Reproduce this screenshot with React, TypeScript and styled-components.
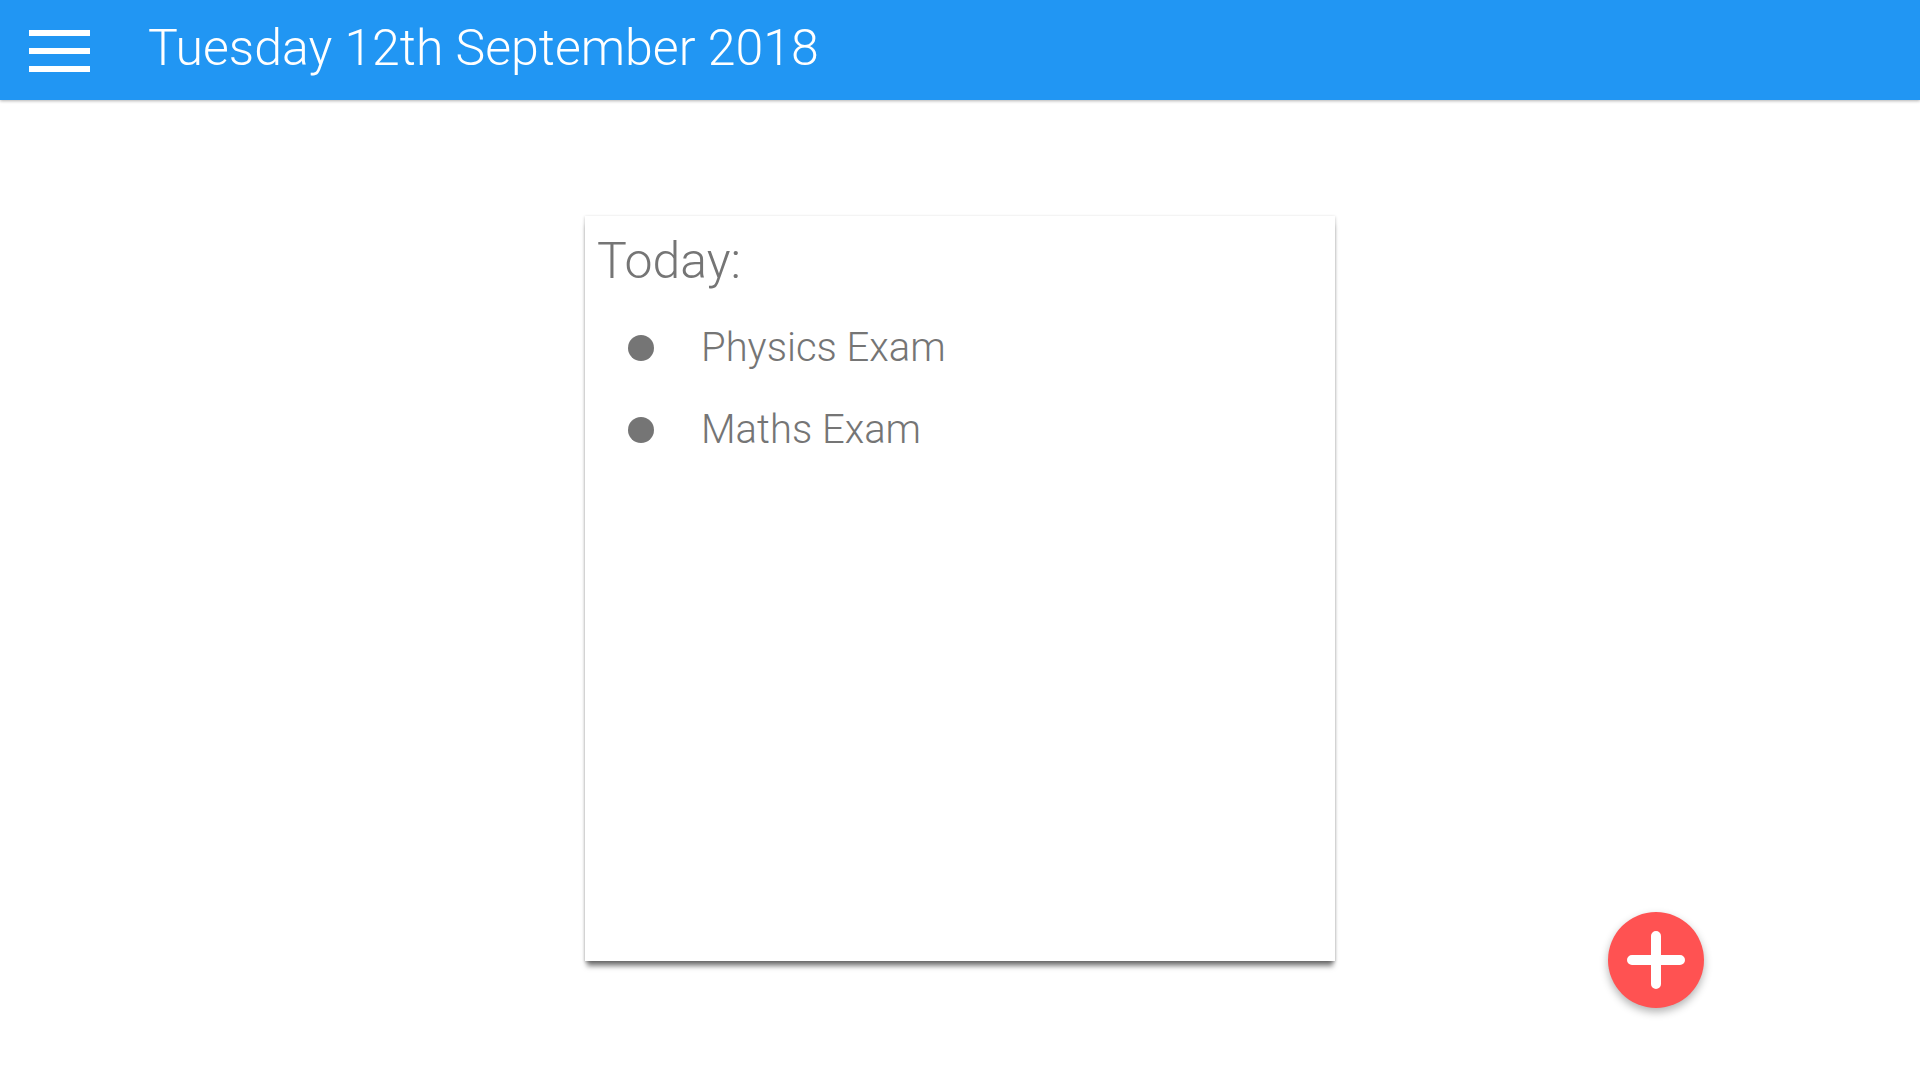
import React from "react";
import styled, { createGlobalStyle } from "styled-components";

const Global = createGlobalStyle`
  html, body { margin: 0; padding: 0; background: #ffffff; }
  body { font-family: Roboto, "Noto Sans", sans-serif; }
`;

const Page = styled.div`
  min-height: 1080px;
  display: flex;
  flex-direction: column;
`;

const Header = styled.header`
  height: 100px;
  background: #2196f3;
  display: flex;
  align-items: center;
  box-shadow: 0 1px 3px rgba(0, 0, 0, 0.3);
  box-sizing: border-box;
`;

const MenuButton = styled.div`
  width: 61px;
  margin-left: 29px;
  display: flex;
  flex-direction: column;
  gap: 12px;
  margin-top: 1px;
`;

const Bar = styled.span`
  display: block;
  height: 6px;
  background: #ffffff;
`;

const Title = styled.h1`
  margin: 0 0 0 58px;
  font-family: Roboto, sans-serif;
  font-weight: 300;
  font-size: 50px;
  color: #ffffff;
  line-height: 1;
  margin-top: -5px;
`;

const Main = styled.main`
  display: flex;
  justify-content: center;
  padding-top: 116px;
`;

const Card = styled.section`
  width: 750px;
  height: 745px;
  background: #ffffff;
  box-sizing: border-box;
  padding: 16px 12px;
  box-shadow: 0 7px 5px -2px rgba(0, 0, 0, 0.5), 0 1px 3px rgba(0, 0, 0, 0.25);
`;

const Heading = styled.h2`
  margin: 0;
  font-family: Roboto, sans-serif;
  font-weight: 300;
  font-size: 50px;
  line-height: 58px;
  color: #757575;
`;

const List = styled.ul`
  list-style: none;
  margin: 32px 0 0 0;
  padding: 0 0 0 31px;
  display: flex;
  flex-direction: column;
  gap: 30px;
`;

const Item = styled.li`
  display: flex;
  align-items: center;
  gap: 47px;
  font-family: Roboto, sans-serif;
  font-weight: 300;
  font-size: 40px;
  line-height: 52px;
  color: #757575;
`;

const Dot = styled.span`
  width: 26px;
  height: 26px;
  border-radius: 50%;
  background: #757575;
  flex: none;
`;

const Fab = styled.button`
  position: absolute;
  left: 1608px;
  top: 912px;
  width: 96px;
  height: 96px;
  border-radius: 50%;
  border: none;
  background: #ff5252;
  box-shadow: 0 4px 8px rgba(0, 0, 0, 0.3);
  display: flex;
  align-items: center;
  justify-content: center;
  padding: 0;
`;

export default function App() {
  return (
    <Page>
      <Global />
      <Header>
        <MenuButton>
          <Bar />
          <Bar />
          <Bar />
        </MenuButton>
        <Title>Tuesday 12th September 2018</Title>
      </Header>
      <Main>
        <Card>
          <Heading>Today:</Heading>
          <List>
            <Item>
              <Dot />
              Physics Exam
            </Item>
            <Item>
              <Dot />
              Maths Exam
            </Item>
          </List>
        </Card>
      </Main>
      <Fab aria-label="Add">
        <svg width="58" height="58" viewBox="0 0 58 58">
          <path d="M29 5 V53 M5 29 H53" stroke="#ffffff" strokeWidth="10" strokeLinecap="round" />
        </svg>
      </Fab>
    </Page>
  );
}
